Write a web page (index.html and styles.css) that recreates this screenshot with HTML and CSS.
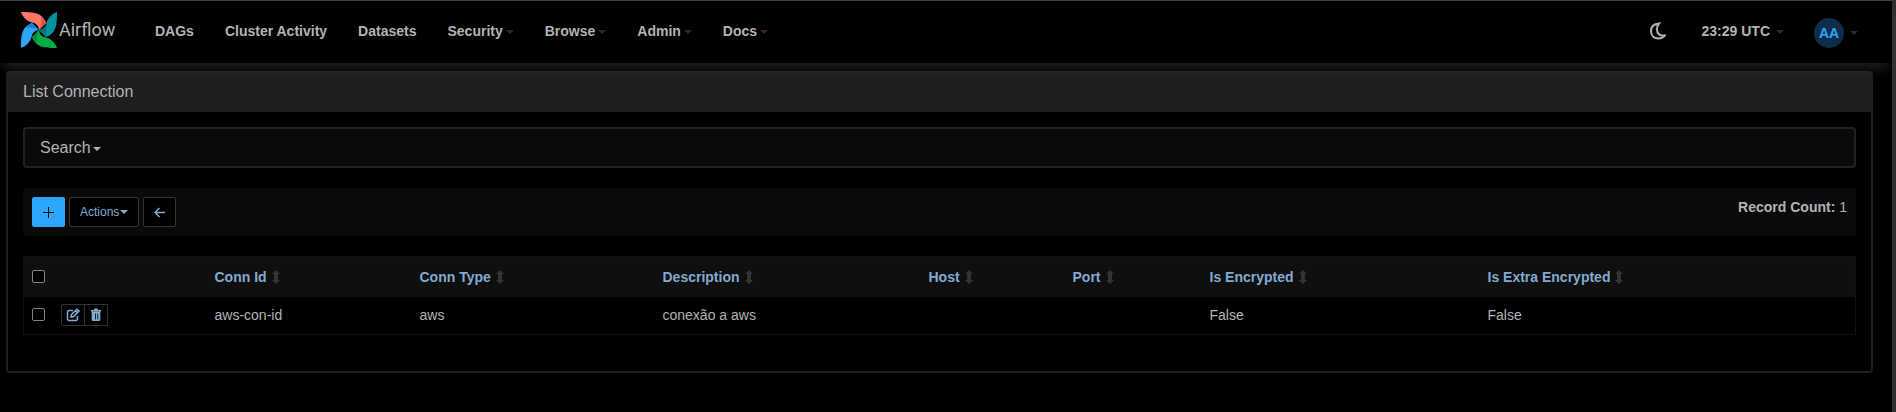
FILE: index.html
```html
<!DOCTYPE html>
<html lang="en">
<head>
<meta charset="utf-8">
<title>List Connection - Airflow</title>
<link rel="stylesheet" href="styles.css">
</head>
<body>
<svg class="defs" aria-hidden="true">
  <symbol id="sort" viewBox="0 0 8 14"><path d="M4 0 8 4H6v6h2l-4 4-4-4h2V4H0z"/></symbol>
</svg>
<div class="page">
<header class="navbar">
  <a class="brand" href="#">
    <svg class="pinwheel" viewBox="0 0 36 36" aria-hidden="true">
      <g>
        <path fill="#ff7a66" d="M0 0c7 0 14 0 19 3 3 2 5 5 6 8l-7 7c0-3-2-6-5-7C7 10 2 6 0 0z"/>
        <path fill="#e0533f" d="M20 5c3 2 4 4 5 6l-7 7c2-4 3-8 2-13z"/>
      </g>
      <g transform="rotate(90 18 18)">
        <path fill="#00919e" d="M0 0c7 0 14 0 19 3 3 2 5 5 6 8l-7 7c0-3-2-6-5-7C7 10 2 6 0 0z"/>
        <path fill="#007580" d="M11 10c5 0 9 1 14 1l-7 7c-1-4-3-6-7-8z"/>
      </g>
      <g transform="rotate(180 18 18)">
        <path fill="#00ad46" d="M0 0c7 0 14 0 19 3 3 2 5 5 6 8l-7 7c0-3-2-6-5-7C7 10 2 6 0 0z"/>
        <path fill="#008a38" d="M20 5c3 2 4 4 5 6l-7 7c2-4 3-8 2-13z"/>
      </g>
      <g transform="rotate(270 18 18)">
        <path fill="#2ea6ff" d="M0 0c7 0 14 0 19 3 3 2 5 5 6 8l-7 7c0-3-2-6-5-7C7 10 2 6 0 0z"/>
        <path fill="#0b82d8" d="M20 5c3 2 4 4 5 6l-7 7c2-4 3-8 2-13z"/>
      </g>
    </svg>
    <span>Airflow</span>
  </a>
  <nav class="menu">
    <a href="#">DAGs</a>
    <a href="#">Cluster Activity</a>
    <a href="#">Datasets</a>
    <a href="#">Security<i class="caret"></i></a>
    <a href="#">Browse<i class="caret"></i></a>
    <a href="#">Admin<i class="caret"></i></a>
    <a href="#">Docs<i class="caret"></i></a>
  </nav>
  <div class="tools">
    <button class="theme" aria-label="Toggle theme"><svg viewBox="0 0 16 18" aria-hidden="true"><path d="M9 1.500C4 2 1 5 1 9c0 4.500 3 7.500 7.500 7.500 3 0 5-1.200 6.300-3-5 .8-7.800-1.800-7.800-5.800C7 5 7.600 3 9 1.500z"/></svg></button>
    <a class="clock" href="#">23:29 UTC<i class="caret"></i></a>
    <a class="user" href="#"><span class="avatar">AA</span><i class="caret"></i></a>
  </div>
</header>
<main class="panel">
  <h1 class="panel-title">List Connection</h1>
  <div class="panel-body">
    <button class="search">Search<i class="caret"></i></button>
    <div class="toolbar">
      <div class="actions">
        <button class="btn primary" aria-label="Add"><svg viewBox="0 0 11 11" aria-hidden="true"><path d="M5.500 0v11M0 5.500h11"/></svg></button>
        <button class="btn">Actions<i class="caret"></i></button>
        <button class="btn" aria-label="Back"><svg viewBox="0 0 11 11" aria-hidden="true"><path class="thick" d="M11 5.500H1.500M5.500 1 1 5.500 5.500 10"/></svg></button>
      </div>
      <div class="count"><strong>Record Count:</strong> 1</div>
    </div>
    <table class="list">
      <colgroup><col class="c-check"><col class="c-edit"><col class="c-id"><col class="c-type"><col class="c-desc"><col class="c-host"><col class="c-port"><col class="c-enc"><col class="c-extra"></colgroup>
      <thead>
        <tr>
          <th><input type="checkbox" aria-label="Select all"></th>
          <th></th>
          <th><a href="#">Conn Id<svg class="sort"><use href="#sort"/></svg></a></th>
          <th><a href="#">Conn Type<svg class="sort"><use href="#sort"/></svg></a></th>
          <th><a href="#">Description<svg class="sort"><use href="#sort"/></svg></a></th>
          <th><a href="#">Host<svg class="sort"><use href="#sort"/></svg></a></th>
          <th><a href="#">Port<svg class="sort"><use href="#sort"/></svg></a></th>
          <th><a href="#">Is Encrypted<svg class="sort"><use href="#sort"/></svg></a></th>
          <th><a href="#">Is Extra Encrypted<svg class="sort"><use href="#sort"/></svg></a></th>
        </tr>
      </thead>
      <tbody>
        <tr>
          <td><input type="checkbox" aria-label="Select aws-con-id"></td>
          <td>
            <div class="row-btns">
              <button aria-label="Edit"><svg viewBox="0 0 14 14" aria-hidden="true"><path class="line" d="M7 2.500H3A1.500 1.500 0 0 0 1.500 4v7A1.500 1.500 0 0 0 3 12.500h7a1.500 1.500 0 0 0 1.500-1.500V8M5 9l.5-2.500 5.500-5.300 2 1.900-5.500 5.400zM9.500 2.800l1.800 1.800"/></svg></button>
              <button aria-label="Delete"><svg viewBox="0 0 14 14" aria-hidden="true"><path fill-rule="evenodd" d="M2 2h3l.5-1.500h3L9 2h3v1.700H2zM2.700 3.500h8.600v8A1.500 1.500 0 0 1 9.800 13H4.200a1.500 1.500 0 0 1-1.500-1.500zM6 5.500v6h.8v-6zM8.400 5.500v6h.8v-6z"/></svg></button>
            </div>
          </td>
          <td>aws-con-id</td>
          <td>aws</td>
          <td>conexão a aws</td>
          <td></td>
          <td></td>
          <td>False</td>
          <td>False</td>
        </tr>
      </tbody>
    </table>
  </div>
</main>
</div>
</body>
</html>
```
FILE: styles.css
```css
* { box-sizing: border-box; }
body {
  margin: 0;
  background: #000;
  color: #b3b3b3;
  font: 14px/20px "Liberation Sans", Arial, sans-serif;
}
a { color: inherit; text-decoration: none; }
button { font: inherit; color: inherit; cursor: pointer; }
.defs { display: none; }
.page {
  min-height: 100vh;
  border-top: 1px solid #404040;
  border-right: 4px solid #303030;
}
.caret {
  display: inline-block;
  border: 4px solid transparent;
  border-top-color: currentColor;
  border-bottom: 0;
  vertical-align: middle;
}

.navbar {
  position: relative;
  z-index: 1;
  display: flex;
  align-items: center;
  height: 62px;
  padding: 0 21px 2px;
  background: #000;
  box-shadow: 0 8px 12px -4px rgba(255, 255, 255, .14);
}
.brand {
  display: flex;
  align-items: center;
  gap: 2px;
  width: 134px;
  padding-bottom: 3px;
  font: 18px/24px Roboto, sans-serif;
}
.pinwheel { width: 36px; height: 36px; }
.menu { display: flex; gap: 31px; font-weight: bold; }
.menu .caret, .tools .caret { margin-left: 3px; border-top-color: #33262f; }
.tools { display: flex; align-items: center; margin-left: auto; padding-right: 13px; }
.theme { padding: 0; border: 0; background: none; }
.theme svg { display: block; width: 16px; height: 18px; fill: none; stroke: #b3b3b3; stroke-width: 2; }
.clock { margin-left: 36px; font-weight: bold; }
.user { display: flex; align-items: center; margin-left: 30px; padding-top: 4px; }
.avatar {
  width: 30px;
  border-radius: 50%;
  background: #0e2d4a;
  color: #2ea6ff;
  font-weight: bold;
  line-height: 30px;
  text-align: center;
}
.tools .clock .caret, .tools .user .caret { margin-left: 6px; }

.panel {
  margin: 8px 19px 20px 6px;
  border: 2px solid #1e1e1e;
  border-radius: 4px;
}
.panel-title {
  margin: 0;
  padding: 9px 15px 10px;
  background: #1e1e1e;
  font-size: 16px;
  font-weight: normal;
  line-height: 20px;
}
.panel-body { padding: 15px 15px 36px; }
.search {
  display: block;
  width: 100%;
  padding: 9px 15px 8px;
  border: 2px solid #222;
  border-radius: 4px;
  background: #0a0a0a;
  font-size: 16px;
  text-align: left;
}
.search .caret { margin-left: 2px; }
.toolbar {
  display: flex;
  justify-content: space-between;
  margin: 20px 0;
  padding: 9px;
  border-radius: 4px;
  background: #0a0a0a;
}
.actions { display: flex; gap: 4px; }
.btn {
  display: flex;
  align-items: center;
  justify-content: center;
  height: 30px;
  padding: 0 10px;
  border: 1px solid #333;
  border-radius: 2px;
  background: #000;
  color: #82aad2;
  font-size: 12px;
}
.btn svg { width: 11px; height: 11px; fill: none; stroke: currentColor; stroke-width: 1; }
.btn .caret { margin-left: 1px; }
.btn .thick { stroke-width: 1.500; }
.btn.primary { border-color: #2ea6ff; background: #2ea6ff; color: #000; }

.list {
  width: 100%;
  border: 1px solid #111;
  border-collapse: collapse;
  table-layout: fixed;
}
.list th, .list td { padding: 8px; text-align: left; vertical-align: middle; }
.list th { height: 40px; background: #0f0f0f; color: #82aad2; }
.list td { height: 36px; padding-top: 7px; }
.c-check { width: 29px; }
.c-edit { width: 154px; }
.c-id { width: 205px; }
.c-type { width: 243px; }
.c-desc { width: 266px; }
.c-host { width: 144px; }
.c-port { width: 137px; }
.c-enc { width: 278px; }
.sort { width: 8px; height: 14px; margin-left: 5px; fill: #333; vertical-align: -2px; }
.list input {
  display: block;
  width: 13px;
  height: 13px;
  margin: 0;
  border: 1px solid #858585;
  border-radius: 2px;
  background: #000;
  appearance: none;
}
.row-btns { display: flex; }
.row-btns button {
  display: flex;
  align-items: center;
  justify-content: center;
  width: 24px;
  height: 22px;
  padding: 0;
  border: 1px solid #333;
  border-radius: 2px 0 0 2px;
  background: #000;
  color: #82aad2;
}
.row-btns button + button { margin-left: -1px; border-radius: 0; }
.row-btns svg { width: 14px; height: 14px; fill: currentColor; }
.row-btns .line { fill: none; stroke: currentColor; stroke-width: 1.500; }
```
